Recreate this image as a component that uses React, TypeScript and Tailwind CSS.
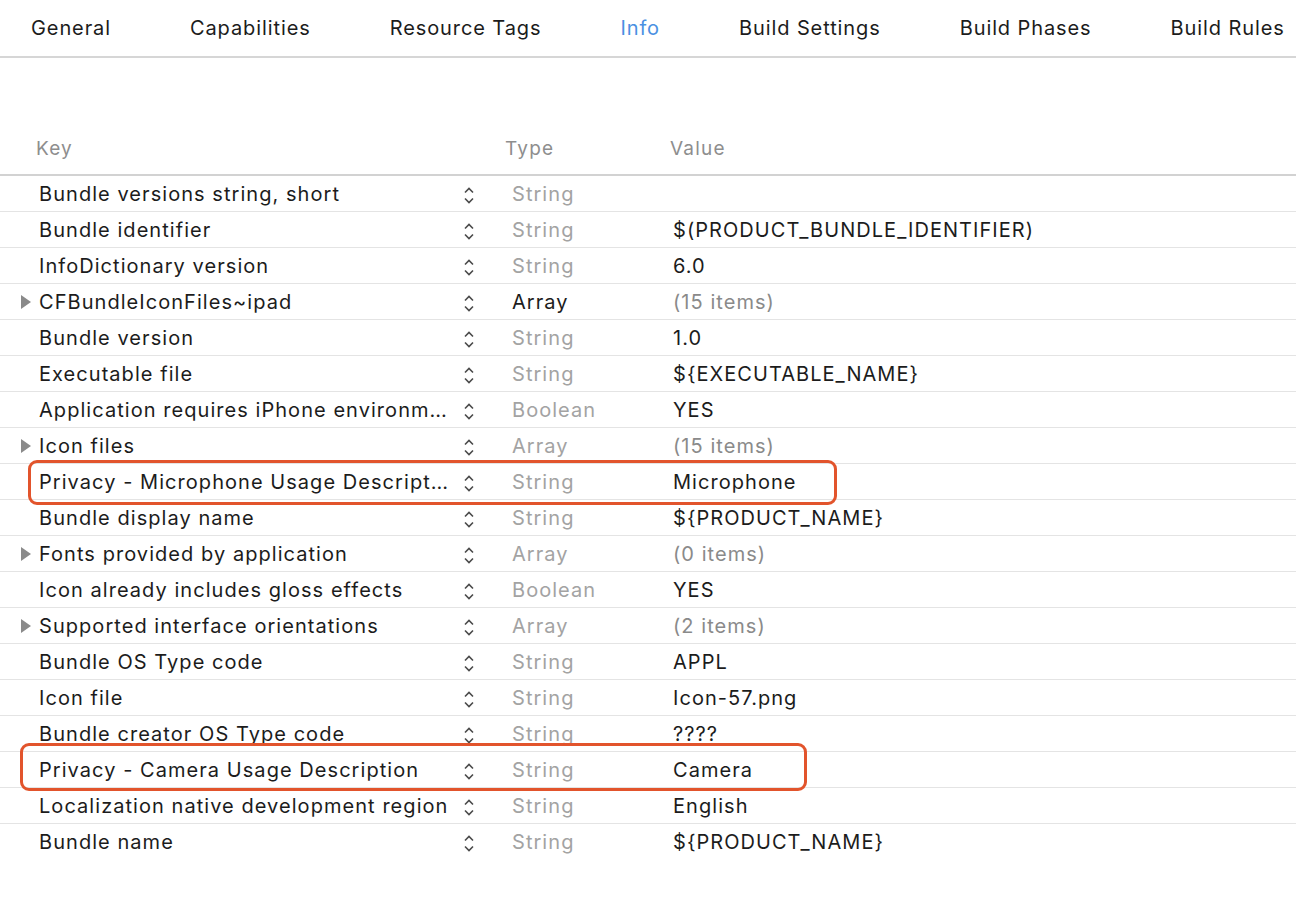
import React from "react";

const tabs = ["General", "Capabilities", "Resource Tags", "Info", "Build Settings", "Build Phases", "Build Rules"];

type Row = {
  key: string;
  type: string;
  value: string;
  expandable?: boolean;
  strongType?: boolean;
  muted?: boolean;
};

const rows: Row[] = [
  { key: "Bundle versions string, short", type: "String", value: "" },
  { key: "Bundle identifier", type: "String", value: "$(PRODUCT_BUNDLE_IDENTIFIER)" },
  { key: "InfoDictionary version", type: "String", value: "6.0" },
  { key: "CFBundleIconFiles~ipad", type: "Array", value: "(15 items)", expandable: true, strongType: true, muted: true },
  { key: "Bundle version", type: "String", value: "1.0" },
  { key: "Executable file", type: "String", value: "${EXECUTABLE_NAME}" },
  { key: "Application requires iPhone environm…", type: "Boolean", value: "YES" },
  { key: "Icon files", type: "Array", value: "(15 items)", expandable: true, muted: true },
  { key: "Privacy - Microphone Usage Descript…", type: "String", value: "Microphone" },
  { key: "Bundle display name", type: "String", value: "${PRODUCT_NAME}" },
  { key: "Fonts provided by application", type: "Array", value: "(0 items)", expandable: true, muted: true },
  { key: "Icon already includes gloss effects", type: "Boolean", value: "YES" },
  { key: "Supported interface orientations", type: "Array", value: "(2 items)", expandable: true, muted: true },
  { key: "Bundle OS Type code", type: "String", value: "APPL" },
  { key: "Icon file", type: "String", value: "Icon-57.png" },
  { key: "Bundle creator OS Type code", type: "String", value: "????" },
  { key: "Privacy - Camera Usage Description", type: "String", value: "Camera" },
  { key: "Localization native development region", type: "String", value: "English" },
  { key: "Bundle name", type: "String", value: "${PRODUCT_NAME}" },
];

function Stepper() {
  return (
    <svg width="14" height="22" viewBox="0 0 14 22" className="text-[#4a4a4a]">
      <path d="M3 8.5 L7 4.5 L11 8.5" fill="none" stroke="currentColor" strokeWidth="1.6" />
      <path d="M3 14.5 L7 18.5 L11 14.5" fill="none" stroke="currentColor" strokeWidth="1.6" />
    </svg>
  );
}

function Disclosure() {
  return (
    <svg width="12" height="16" viewBox="0 0 12 16">
      <path d="M1 1 L11 8 L1 15 Z" fill="#8a8a8a" />
    </svg>
  );
}

export default function App() {
  return (
    <div
      className="w-[1296px] h-[922px] bg-white text-[#1c1c1c] overflow-hidden"
      style={{ fontFamily: 'Inter, "Liberation Sans", Arial, sans-serif' }}
    >
      {/* Tab bar */}
      <div className="h-[58px] flex items-center gap-[79px] pl-[31px] border-b-2 border-[#d6d6d6] text-[20px] tracking-[0.9px] whitespace-nowrap">
        {tabs.map((t) => (
          <span key={t} className={t === "Info" ? "text-[#4a90e2]" : "text-[#1c1c1c]"}>
            {t}
          </span>
        ))}
      </div>

      {/* Column headers */}
      <div className="h-[118px] grid grid-cols-[36px_469px_165px_1fr] items-end pb-[11px] text-[19px] tracking-[1.2px] text-[#8e8e8e] border-b-2 border-[#d2d2d2]">
        <span />
        <span>Key</span>
        <span>Type</span>
        <span>Value</span>
      </div>

      {/* Rows */}
      <div className="relative">
        {rows.map((r, i) => (
          <div
            key={i}
            className={`h-[36px] grid grid-cols-[39px_423px_50px_161px_1fr] items-center text-[20px] tracking-[1.05px] ${
              i < rows.length - 1 ? "border-b border-[#e4e4e4]" : ""
            }`}
          >
            <div className="flex justify-end pr-[7px]">{r.expandable && <Disclosure />}</div>
            <div className="whitespace-nowrap overflow-hidden">{r.key}</div>
            <div className="flex pt-[2px]">
              <Stepper />
            </div>
            <div className={r.strongType ? "text-[#1c1c1c]" : "text-[#a3a3a3]"}>{r.type}</div>
            <div className={`whitespace-nowrap ${r.muted ? "text-[#8a8a8a]" : "text-[#1c1c1c]"}`}>{r.value}</div>
          </div>
        ))}

        {/* Highlight boxes */}
        <div className="absolute left-[28px] top-[284px] w-[809px] h-[45px] border-[3px] border-[#e2542c] rounded-[9px] pointer-events-none" />
        <div className="absolute left-[20px] top-[567px] w-[787px] h-[48px] border-[3px] border-[#e2542c] rounded-[9px] pointer-events-none" />
      </div>
    </div>
  );
}
